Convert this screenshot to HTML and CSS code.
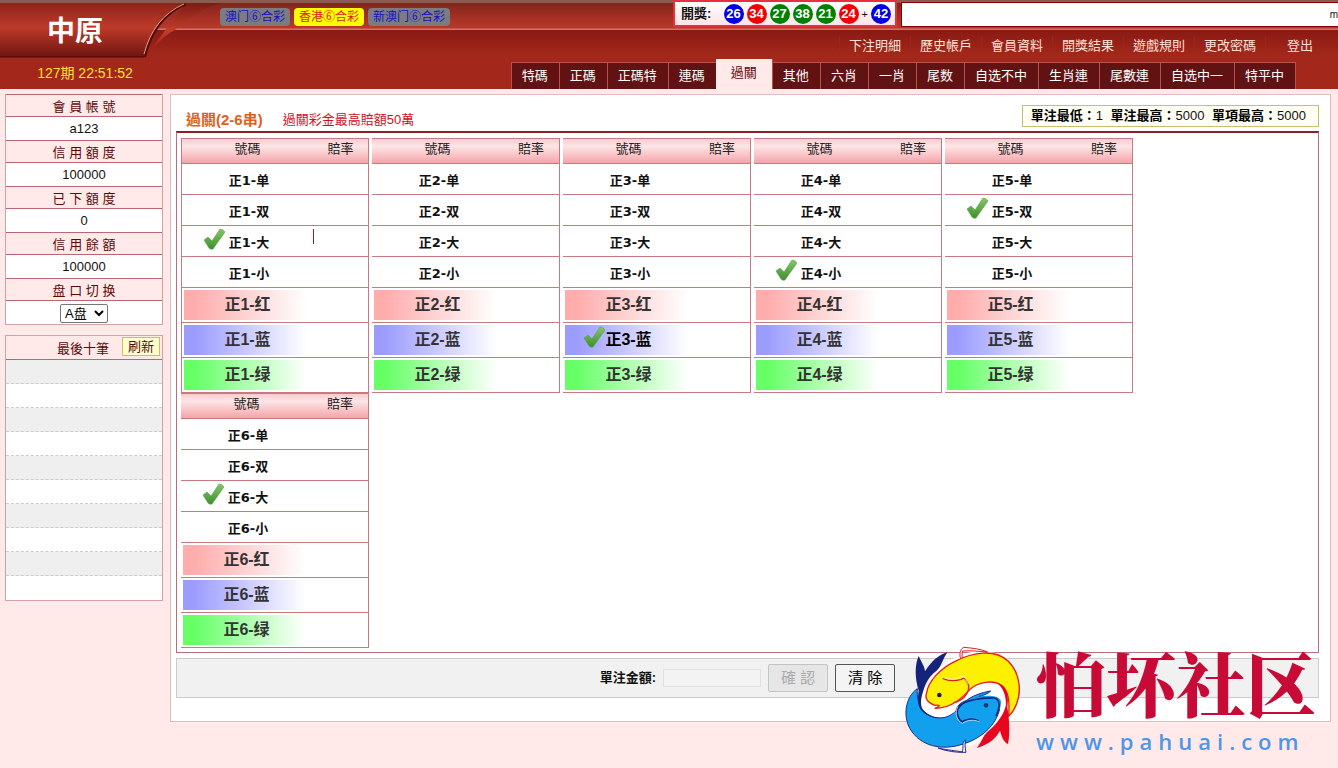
FILE: index.html
```
<!DOCTYPE html>
<html lang="zh-Hant">
<head>
  <meta charset="UTF-8">
  <meta name="viewport" content="width=device-width, initial-scale=1.0">
  <title>中原</title>
  <link rel="stylesheet" href="styles.css">
</head>
<body>
  <!-- Header -->
  <header class="header">
    <div class="brand">
      <svg class="brand-bg" width="230" height="60" viewBox="0 0 230 60" aria-hidden="true">
        <defs>
          <linearGradient id="tab" x1="0" y1="0" x2="0" y2="1">
            <stop offset="0" stop-color="#8f2318"/>
            <stop offset=".45" stop-color="#bd3a2b"/>
            <stop offset="1" stop-color="#6f150f"/>
          </linearGradient>
          <linearGradient id="fold" x1="0" y1="0" x2="0" y2="1">
            <stop offset="0" stop-color="#7c1b13"/>
            <stop offset=".5" stop-color="#c33d28"/>
            <stop offset="1" stop-color="#8c1c13"/>
          </linearGradient>
        </defs>
        <path d="M186 3H222C196 10 184 22 175 30C163 36 153 48 145 57Z" fill="url(#fold)"/>
        <path d="M0 3H188C164 12 150 31 144 57H0Z" fill="url(#tab)"/>
        <path d="M0 57H144" stroke="#4d0d09" fill="none"/>
        <path d="M186 4C165 13 151 32 145 57" stroke="#4d0d09" stroke-width="2" fill="none"/>
        <path d="M184 4C163 13 150 31 144 54" stroke="#e59684" fill="none"/>
      </svg>
      <h1>中原</h1>
      <p class="issue">127期 22:51:52</p>
    </div>
    <div class="header-main">
      <div class="top-row">
        <div class="lotteries">
          <button type="button">澳门⑥合彩</button>
          <button type="button" class="active">香港⑥合彩</button>
          <button type="button">新澳门⑥合彩</button>
        </div>
        <div class="result">
          <b>開獎:</b>
          <span class="ball blue">26</span>
          <span class="ball red">34</span>
          <span class="ball green">27</span>
          <span class="ball green">38</span>
          <span class="ball green">21</span>
          <span class="ball red">24</span>
          <span class="plus">+</span>
          <span class="ball blue">42</span>
        </div>
        <div class="notice">m</div>
      </div>
      <nav class="menu">
        <a href="#">下注明細</a>
        <a href="#">歷史帳戶</a>
        <a href="#">會員資料</a>
        <a href="#">開獎結果</a>
        <a href="#">遊戲規則</a>
        <a href="#">更改密碼</a>
        <a href="#" class="logout">登出</a>
      </nav>
      <nav class="tabs">
        <a href="#">特碼</a>
        <a href="#">正碼</a>
        <a href="#">正碼特</a>
        <a href="#">連碼</a>
        <a href="#" class="active">過關</a>
        <a href="#">其他</a>
        <a href="#">六肖</a>
        <a href="#">一肖</a>
        <a href="#">尾数</a>
        <a href="#">自选不中</a>
        <a href="#">生肖連</a>
        <a href="#">尾數連</a>
        <a href="#">自选中一</a>
        <a href="#">特平中</a>
      </nav>
    </div>
  </header>

  <div class="layout">
    <!-- Member info -->
    <aside class="sidebar">
      <dl class="account">
        <dt>會 員 帳 號</dt>
        <dd>a123</dd>
        <dt>信 用 額 度</dt>
        <dd>100000</dd>
        <dt>已 下 額 度</dt>
        <dd>0</dd>
        <dt>信 用 餘 額</dt>
        <dd>100000</dd>
        <dt><label for="plate">盘 口 切 换</label></dt>
        <dd>
          <select id="plate">
            <option>A盘</option>
            <option>B盘</option>
            <option>C盘</option>
          </select>
        </dd>
      </dl>
      <div class="latest">
        <div class="latest-head">
          <span>最後十筆</span>
          <button type="button">刷新</button>
        </div>
        <ul>
          <li></li><li></li><li></li><li></li><li></li>
          <li></li><li></li><li></li><li></li><li></li>
        </ul>
      </div>
    </aside>

    <!-- Betting panel -->
    <main class="panel">
      <div class="panel-head">
        <h2>過關(2-6串)</h2>
        <span class="tip">過關彩金最高賠額50萬</span>
        <p class="limits"><b>單注最低：</b>1 <b>單注最高：</b>5000 <b>單項最高：</b>5000</p>
      </div>

      <div class="boards">
        <table>
          <tr><th>號碼</th><th>賠率</th></tr>
          <tr><td><span>正1-单</span></td><td></td></tr>
          <tr><td><span>正1-双</span></td><td></td></tr>
          <tr><td><span><svg class="tick"><use href="#tick"/></svg>正1-大</span></td><td><i class="caret"></i></td></tr>
          <tr><td><span>正1-小</span></td><td></td></tr>
          <tr class="wave red"><td><span>正1-红</span></td><td></td></tr>
          <tr class="wave blue"><td><span>正1-蓝</span></td><td></td></tr>
          <tr class="wave green"><td><span>正1-绿</span></td><td></td></tr>
        </table>
        <table>
          <tr><th>號碼</th><th>賠率</th></tr>
          <tr><td><span>正2-单</span></td><td></td></tr>
          <tr><td><span>正2-双</span></td><td></td></tr>
          <tr><td><span>正2-大</span></td><td></td></tr>
          <tr><td><span>正2-小</span></td><td></td></tr>
          <tr class="wave red"><td><span>正2-红</span></td><td></td></tr>
          <tr class="wave blue"><td><span>正2-蓝</span></td><td></td></tr>
          <tr class="wave green"><td><span>正2-绿</span></td><td></td></tr>
        </table>
        <table>
          <tr><th>號碼</th><th>賠率</th></tr>
          <tr><td><span>正3-单</span></td><td></td></tr>
          <tr><td><span>正3-双</span></td><td></td></tr>
          <tr><td><span>正3-大</span></td><td></td></tr>
          <tr><td><span>正3-小</span></td><td></td></tr>
          <tr class="wave red"><td><span>正3-红</span></td><td></td></tr>
          <tr class="wave blue picked"><td><span><svg class="tick"><use href="#tick"/></svg>正3-蓝</span></td><td></td></tr>
          <tr class="wave green"><td><span>正3-绿</span></td><td></td></tr>
        </table>
        <table>
          <tr><th>號碼</th><th>賠率</th></tr>
          <tr><td><span>正4-单</span></td><td></td></tr>
          <tr><td><span>正4-双</span></td><td></td></tr>
          <tr><td><span>正4-大</span></td><td></td></tr>
          <tr><td><span><svg class="tick"><use href="#tick"/></svg>正4-小</span></td><td></td></tr>
          <tr class="wave red"><td><span>正4-红</span></td><td></td></tr>
          <tr class="wave blue"><td><span>正4-蓝</span></td><td></td></tr>
          <tr class="wave green"><td><span>正4-绿</span></td><td></td></tr>
        </table>
        <table>
          <tr><th>號碼</th><th>賠率</th></tr>
          <tr><td><span>正5-单</span></td><td></td></tr>
          <tr><td><span><svg class="tick"><use href="#tick"/></svg>正5-双</span></td><td></td></tr>
          <tr><td><span>正5-大</span></td><td></td></tr>
          <tr><td><span>正5-小</span></td><td></td></tr>
          <tr class="wave red"><td><span>正5-红</span></td><td></td></tr>
          <tr class="wave blue"><td><span>正5-蓝</span></td><td></td></tr>
          <tr class="wave green"><td><span>正5-绿</span></td><td></td></tr>
        </table>
        <table>
          <tr><th>號碼</th><th>賠率</th></tr>
          <tr><td><span>正6-单</span></td><td></td></tr>
          <tr><td><span>正6-双</span></td><td></td></tr>
          <tr><td><span><svg class="tick"><use href="#tick"/></svg>正6-大</span></td><td></td></tr>
          <tr><td><span>正6-小</span></td><td></td></tr>
          <tr class="wave red"><td><span>正6-红</span></td><td></td></tr>
          <tr class="wave blue"><td><span>正6-蓝</span></td><td></td></tr>
          <tr class="wave green"><td><span>正6-绿</span></td><td></td></tr>
        </table>
      </div>

      <form class="bet-bar">
        <label for="amount">單注金額:</label>
        <input type="text" id="amount" disabled>
        <button type="button" disabled>確 認</button>
        <button type="reset">清 除</button>
      </form>
    </main>
  </div>

  <!-- Community logo -->
  <div class="watermark">
    <svg width="126" height="116" viewBox="0 0 378 348" aria-hidden="true">
      <path d="M60 200C50 172 62 146 88 122C90 100 112 76 150 55C195 28 262 14 310 45C355 75 372 135 345 190C340 215 322 225 300 242C270 290 225 315 165 318C70 322 22 275 20 215C20 180 30 158 52 140Z" fill="#fff"/>
      <!-- blue fish -->
      <path d="M52 140C16 165 8 222 30 260C60 312 125 328 190 306C235 292 275 262 292 222C304 196 300 178 284 170C262 164 238 168 216 172C188 176 170 188 168 208C168 226 178 240 186 240C196 232 216 230 234 236C214 236 200 234 188 243C168 238 150 232 128 229C100 229 76 218 64 200C56 186 50 162 52 140Z" fill="#10a0ee" stroke="#1c2c8c" stroke-width="3"/>
      <path d="M64 200C80 224 108 232 136 226C166 216 178 200 190 182C210 164 240 152 272 147C262 158 248 160 236 163C268 159 292 160 302 174C306 190 298 206 284 226C270 240 230 250 190 250C140 260 90 240 64 200Z" fill="#10a0ee"/>
      <path d="M64 200C80 224 108 232 136 226C166 216 178 196 196 178C215 162 242 152 272 147C262 158 248 160 236 163" fill="none" stroke="#1c2c8c" stroke-width="3"/>
      <path d="M236 236C216 228 196 232 186 240C172 230 166 206 178 192C196 176 240 166 284 168C302 174 300 198 288 222" fill="none" stroke="#16237c" stroke-width="5"/>
      <path d="M238 239C218 231 200 235 187 244C172 238 162 214 174 193" fill="none" stroke="#fff" stroke-width="2"/>
      <path d="M56 146C44 108 44 68 56 42C66 64 74 74 75 88C94 58 116 38 143 31C128 48 126 74 109 87C90 100 78 120 70 146C64 164 60 182 66 198C74 212 86 218 96 222C78 222 62 208 56 190C52 174 54 160 56 146Z" fill="#16237c"/>
      <path d="M114 318C145 325 168 326 187 330C192 316 184 302 196 294C194 310 196 322 198 331C170 332 140 328 114 318Z" fill="#fff" stroke="#1c2c8c" stroke-width="3"/>
      <circle cx="258" cy="190" r="7" fill="#173a70"/>
      <!-- yellow fish -->
      <path d="M184 53C176 40 180 24 190 16C220 18 244 22 263 30C235 28 210 25 188 27C185 34 186 44 188 52Z" fill="#fff" stroke="#e51c23" stroke-width="3"/>
      <path d="M104 190C84 182 74 172 79 156C84 118 120 80 165 58C218 30 285 20 325 58C362 96 368 156 342 202C336 214 330 218 326 222C328 190 330 148 304 130C278 112 234 120 210 142C190 164 155 200 104 199C118 194 126 188 104 190Z" fill="#fdf000" stroke="#e51c23" stroke-width="4"/>
      <path d="M128 109C146 118 164 118 184 112C198 102 200 122 206 130C208 158 184 178 160 182" fill="none" stroke="#e51c23" stroke-width="4"/>
      <path d="M130 107C150 114 170 112 182 105C198 98 198 118 204 126" fill="none" stroke="#fff" stroke-width="2"/>
      <path d="M292 124C312 126 330 152 322 194C326 220 332 272 324 306C310 300 304 280 300 266C284 296 256 310 230 318C248 296 248 280 266 266C292 244 312 216 318 188C318 156 308 138 292 124Z" fill="#e8061e"/>
      <circle cx="118" cy="159" r="7" fill="#222"/>
    </svg>
    <div class="watermark-text">
      <strong>怕坏社区</strong>
      <span>www.pahuai.com</span>
    </div>
  </div>

  <svg class="sprite" width="0" height="0" aria-hidden="true">
    <defs>
      <linearGradient id="tickFill" x1="0" y1="0" x2="0" y2="1">
        <stop offset="0" stop-color="#86c66a"/>
        <stop offset="1" stop-color="#3d8f2c"/>
      </linearGradient>
      <symbol id="tick" viewBox="0 0 22 22">
        <path d="M1 12L5 9L9 13L17 1Q20 1 22 4L10 21Q8 22 6 20Z" fill="url(#tickFill)" stroke="#5a9c48" stroke-width=".6"/>
      </symbol>
    </defs>
  </svg>
</body>
</html>
```

FILE: styles.css
```
/* General Styles */
* {
  box-sizing: border-box;
}

body {
  margin: 0;
  min-height: 100vh;
  position: relative;
  background-color: #ffe9e9;
  color: #111;
  font-family: "Liberation Sans", "Noto Sans CJK TC", sans-serif;
  font-size: 13px;
  line-height: 20px;
}

h1, h2, p, dl, dd, ul {
  margin: 0;
  padding: 0;
}

a {
  color: inherit;
  text-decoration: none;
}

button, input, select {
  font: inherit;
}

/* Header */
.header {
  display: flex;
  background: linear-gradient(#8c5a50 0 3px, #84241b 3px, #bb382b 28px, #c9776a 29px 30px, #8a1a13 30px, #a3281b 56px, #a3281b);
}

.brand {
  position: relative;
  width: 200px;
  flex: none;
}

.brand-bg {
  position: absolute;
  top: 0;
  left: 0;
}

.brand h1 {
  position: relative;
  padding: 14px 50px 0 0;
  color: #fff;
  font-size: 28px;
  line-height: 36px;
  text-align: center;
}

.issue {
  position: relative;
  width: 170px;
  padding-top: 13px;
  color: #ffe135;
  font-size: 14px;
  text-align: center;
}

.header-main {
  flex: 1;
  min-width: 0;
}

.top-row {
  display: flex;
  gap: 4px;
  height: 30px;
}

.lotteries {
  position: relative;
  display: flex;
  gap: 4px;
  align-items: flex-start;
  padding: 8px 0 0 20px;
  margin-right: auto;
}

.lotteries button {
  padding: 0 5px;
  border: 0;
  border-radius: 4px;
  background-color: #7c7c80;
  color: #1010c8;
  font-size: 12px;
  line-height: 18px;
  white-space: nowrap;
}

.lotteries .active {
  background-color: #ffff00;
  color: #e02020;
}

.result {
  display: flex;
  align-items: center;
  gap: 3px;
  width: 224px;
  height: 27px;
  padding: 0 4px 0 6px;
  border: 2px solid #e8303c;
  background: linear-gradient(#fff, #ffe3e6);
}

.result b {
  margin-right: auto;
}

.ball {
  width: 20px;
  height: 20px;
  border-radius: 50%;
  color: #fff;
  font-weight: bold;
  text-align: center;
}

.ball.blue {
  background-color: #0000e0;
}

.ball.red {
  background-color: #f00000;
}

.ball.green {
  background-color: #008000;
}

.plus {
  font-size: 11px;
}

.notice {
  width: 437px;
  height: 25px;
  margin-top: 2px;
  overflow: hidden;
  border: 1px solid #800;
  border-right: 0;
  background-color: #fff;
  font-size: 10px;
  line-height: 24px;
  text-align: right;
}

.menu {
  display: flex;
  justify-content: flex-end;
  padding: 6px 16px 0 0;
  color: #ffe0d8;
}

.menu a {
  padding: 0 9px;
  border-left: 1px solid #96281c;
}

.menu .logout {
  padding-left: 21px;
}

.tabs {
  display: flex;
  align-items: flex-end;
  justify-content: flex-end;
  height: 33px;
  padding-right: 43px;
  color: #fff;
}

.tabs a {
  padding: 0 11px 0 10px;
  height: 27px;
  border: solid #b8504c;
  border-width: 1px 0 0 1px;
  background-color: #611212;
  line-height: 26px;
  box-shadow: 1px 0 #b8504c;
}

.tabs .active {
  height: 30px;
  padding: 0 15px 0 14px;
  border-color: #ffe9e9;
  background-color: #ffe9e9;
  color: #5c0808;
}

/* Layout */
.layout {
  display: flex;
  align-items: flex-start;
  gap: 7px;
  padding: 5px 7px 40px 5px;
}

.sidebar {
  width: 158px;
  flex: none;
}

.account {
  border: 1px solid #d9a0a4;
  border-top: 0;
  background-color: #fff;
  text-align: center;
}

.account dt {
  height: 23px;
  border: solid #b8686e;
  border-width: 1px 0;
  background-color: #ffe9e9;
  color: #5c0808;
  line-height: 23px;
}

.account dd {
  height: 23px;
  line-height: 23px;
}

.account select {
  width: 48px;
  height: 19px;
  padding: 0;
  border: 1px solid #767676;
  border-radius: 2px;
  background-color: #fff;
  line-height: 17px;
  vertical-align: middle;
}

.latest {
  margin-top: 10px;
  border: 1px solid #d9a0a4;
  background-color: #fff;
}

.latest-head {
  display: grid;
  grid-template-columns: 1fr auto 1fr;
  height: 24px;
  padding-right: 2px;
  border-bottom: 1px solid #b8686e;
  background-color: #ffe9e9;
  color: #5c0808;
  line-height: 26px;
}

.latest-head span {
  grid-column: 2;
}

.latest-head button {
  justify-self: end;
  height: 19px;
  margin-top: 1px;
  padding: 0 5px;
  border: 1px solid #d0c050;
  background-color: #ffffd0;
  color: #5c0808;
  line-height: 17px;
}

.latest ul {
  list-style: none;
}

.latest li {
  height: 24px;
  border-bottom: 1px dashed #ccc;
}

.latest li:last-child {
  border-bottom: 0;
}

.latest li:nth-child(odd) {
  background-color: #f0eff0;
}

/* Betting panel */
.panel {
  flex: 1;
  min-width: 0;
  padding: 10px 11px 23px 5px;
  border: 1px solid #e0bcc0;
  background-color: #fff;
}

.panel-head {
  display: flex;
  align-items: flex-start;
  padding: 0 0 1px 10px;
}

.panel-head h2 {
  padding-top: 5px;
  color: #e0601c;
  font-size: 15px;
  line-height: 20px;
}

.tip {
  padding: 5px 0 0 20px;
  color: #d0101c;
}

.limits {
  margin-left: auto;
  padding: 0 12px 0 8px;
  border: 1px solid #c8c070;
  background-color: #fffff4;
  white-space: nowrap;
}

.limits b {
  color: #000;
}

.limits b + b {
  margin-left: 4px;
}

.boards {
  display: flex;
  flex-wrap: wrap;
  column-gap: 3px;
  padding: 5px 4px 4px;
  border: 1px solid #b87078;
  border-top: 2px solid #8c2028;
}

.boards table {
  width: 188px;
  table-layout: fixed;
  border-collapse: separate;
  border-spacing: 0;
  border: 1px solid #c87a80;
  border-width: 1px 1px 0 0;
}

.boards table:first-child {
  border-left-width: 1px;
}

.boards th {
  height: 25px;
  padding: 0;
  border-bottom: 1px solid #c87a80;
  background: linear-gradient(#f6ccd0, #fde6e6 30%, #f5a4aa);
  color: #222;
  font-weight: normal;
  line-height: 20px;
  vertical-align: top;
}

.boards th:first-child {
  width: 131px;
}

.boards td {
  height: 31px;
  padding: 3px 0 0;
  border-bottom: 1px solid #c87a80;
  text-align: center;
}

.boards td:first-child {
  padding-left: 3px;
  font-family: "DejaVu Sans", "Noto Sans CJK TC", sans-serif;
  font-weight: bold;
  line-height: 24px;
}

.boards td span {
  position: relative;
}

.boards .wave td {
  height: 35px;
  padding: 2px;
}

.boards .wave td:first-child {
  background-clip: content-box;
  background-repeat: no-repeat;
  color: #333;
  font-family: "Liberation Sans", "Noto Sans CJK TC", sans-serif;
  font-size: 16px;
  line-height: 30px;
}

.boards .wave.red td:first-child {
  background-image: linear-gradient(to right, #ffacac 10%, #fff 95%);
}

.boards .wave.blue td:first-child {
  background-image: linear-gradient(to right, #9c9cff 10%, #fff 95%);
}

.boards .wave.green td:first-child {
  background-image: linear-gradient(to right, #66ff66 10%, #fff 95%);
}

.boards .wave.picked td:first-child {
  color: #000;
}

.tick {
  position: absolute;
  right: 100%;
  bottom: 0;
  width: 26px;
  height: 22px;
  padding-right: 4px;
}

.wave .tick {
  width: 22px;
  padding-right: 0;
}

.caret {
  display: block;
  width: 1px;
  height: 15px;
  margin-bottom: 12px;
  background-color: #8c2028;
}

.bet-bar {
  display: flex;
  align-items: center;
  justify-content: center;
  gap: 7px;
  height: 40px;
  margin-top: 5px;
  border: 1px solid #c8cccc;
  background-color: #f0f1f0;
}

.bet-bar label {
  font-weight: bold;
}

.bet-bar input {
  width: 98px;
  height: 18px;
  border: 1px solid #e0e0e0;
  background-color: #f2f3f2;
}

.bet-bar button {
  width: 60px;
  height: 28px;
  padding: 0;
  border: 1px solid #555;
  border-radius: 2px;
  background-color: #f4f4f4;
  color: #000;
  font-size: 15px;
}

.bet-bar button:disabled {
  border-color: #c4c4c4;
  background-color: #e6e6e6;
  color: #aaa;
}

/* Community logo */
.watermark {
  position: absolute;
  right: 22px;
  bottom: 8px;
  display: flex;
  gap: 10px;
}

.watermark-text {
  display: flex;
  flex-direction: column;
}

.watermark-text strong {
  color: #c80a36;
  font-family: "Noto Serif CJK SC", "Noto Sans CJK SC", serif;
  font-size: 70px;
  font-weight: 900;
  line-height: 80px;
}

.watermark-text span {
  color: #4d96e8;
  font-family: "Open Sans", sans-serif;
  font-size: 22px;
  font-weight: 600;
  letter-spacing: 6px;
  line-height: 38px;
}

.sprite {
  position: absolute;
}
```
